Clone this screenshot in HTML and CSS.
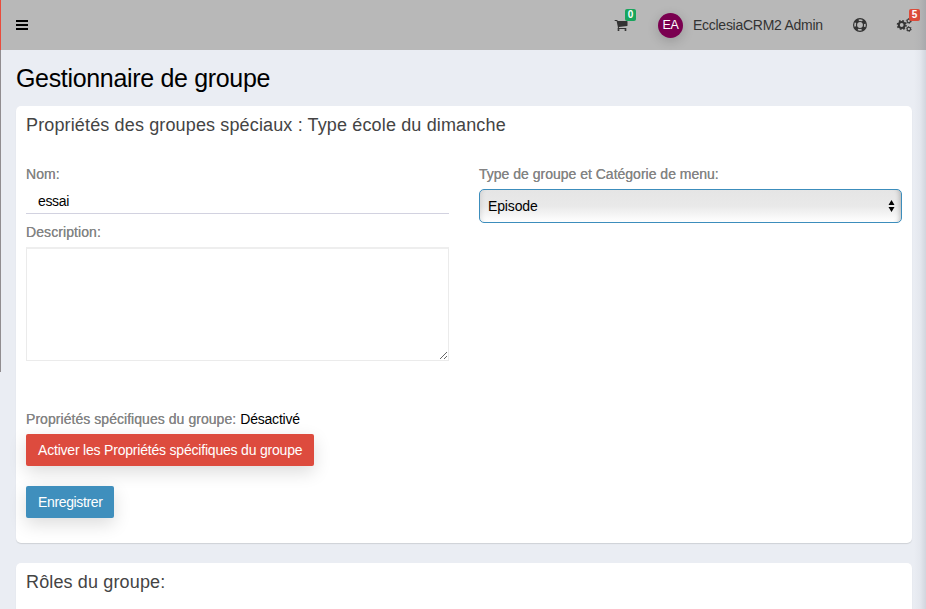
FILE: index.html
```html
<!DOCTYPE html>
<html lang="fr">
<head>
<meta charset="utf-8">
<title>Gestionnaire de groupe</title>
<link rel="stylesheet" href="styles.css">
</head>
<body>
<div class="edge"></div>
<header class="navbar">
  <svg class="bars" width="12" height="11" viewBox="0 0 12 11"><path d="M0 0h12v2H0zM0 4h12v2H0zM0 8h12v2H0z"/></svg>
  <nav class="tools">
    <span class="tool cart">
      <svg width="14" height="14" viewBox="0 0 1792 1792"><path d="M704 1536q0 52-38 90t-90 38-90-38-38-90 38-90 90-38 90 38 38 90zm896 0q0 52-38 90t-90 38-90-38-38-90 38-90 90-38 90 38 38 90zm128-1088v512q0 24-16.500 42.500t-40.500 21.500l-1044 122q13 60 13 70 0 16-24 64h920q26 0 45 19t19 45-19 45-45 19h-1024q-26 0-45-19t-19-45q0-11 8-31.500t16-36 21.500-40 15.500-29.500l-177-823h-204q-26 0-45-19t-19-45 19-45 45-19h256q16 0 28.500 6.500t19.500 15.500 13 24.500 8 26 5.500 29.500 4.500 26h1201q26 0 45 19t19 45z"/></svg>
      <span class="badge green">0</span>
    </span>
    <span class="avatar"><span>EA</span></span>
    <span class="user">EcclesiaCRM2 Admin</span>
    <svg class="ring" width="14" height="14" viewBox="0 0 14 14"><g fill="none" stroke="#333"><circle cx="7" cy="7" r="6.400" stroke-width="1.200"/><circle cx="7" cy="7" r="3.500" stroke-width="1.200"/><circle cx="7" cy="7" r="4.900" stroke-width="3" stroke-dasharray="3.850" stroke-dashoffset="-1.920"/></g></svg>
    <span class="tool cogs">
      <svg width="16" height="14" viewBox="0 0 16 14"><g fill="none" stroke="#333"><circle cx="5.700" cy="7" r="2.900" stroke-width="2"/><circle cx="5.700" cy="7" r="4.300" stroke-width="1.500" stroke-dasharray="1.690"/><circle cx="12.800" cy="3" r="1.700" stroke-width="1.100"/><circle cx="12.800" cy="3" r="2.500" stroke-width=".8" stroke-dasharray="1.310"/><circle cx="12.800" cy="11" r="1.700" stroke-width="1.100"/><circle cx="12.800" cy="11" r="2.500" stroke-width=".8" stroke-dasharray="1.310"/></g></svg>
      <span class="badge red">5</span>
    </span>
  </nav>
</header>
<main>
  <h1>Gestionnaire de groupe</h1>
  <section class="card main-card">
    <h3>Propriétés des groupes spéciaux : Type école du dimanche</h3>
    <div class="columns">
      <div class="col">
        <label>Nom:</label>
        <input class="name" type="text" value="essai">
        <label class="desc">Description:</label>
        <textarea></textarea>
      </div>
      <div class="col">
        <label class="type">Type de groupe et Catégorie de menu:</label>
        <div class="select"><span>Episode</span>
          <svg width="7" height="12" viewBox="0 0 7 12"><path d="M3.500 0L6.500 5h-6zM.5 7h6l-3 5z"/></svg>
        </div>
      </div>
    </div>
    <div class="status"><span class="prop">Propriétés spécifiques du groupe:</span> <span class="off">Désactivé</span></div>
    <button class="btn danger">Activer les Propriétés spécifiques du groupe</button>
    <button class="btn primary">Enregistrer</button>
  </section>
  <section class="card roles">
    <h3>Rôles du groupe:</h3>
  </section>
</main>
<div class="side-shadow"></div>
</body>
</html>
```

FILE: styles.css
```css
* { box-sizing: border-box; }
body { margin: 0; height: 609px; overflow: hidden; background: #eaedf3; color: #000; font: 14px/20px "Liberation Sans", Arial, sans-serif; }
svg { display: block; flex: none; }
.edge { position: absolute; z-index: 3; left: 0; top: 0; width: 1px; height: 372px; background: linear-gradient(#e94b3c 50px, #918d90 50px); }
.side-shadow { position: absolute; z-index: 3; right: 0; top: 0; width: 12px; height: 609px; background: linear-gradient(90deg, rgba(80,90,110,0), rgba(80,90,110,.04) 50%, rgba(80,90,110,.16)); }
.navbar { height: 50px; background: #b8b8b8; display: flex; align-items: center; justify-content: space-between; padding: 0 14px 0 16px; }
.bars { margin-top: 1px; }
.tools { display: flex; align-items: center; color: #333; height: 50px; }
.tool { position: relative; }
.tool path { fill: #333; }
.cart { margin-right: 30px; }
.badge { position: absolute; border-radius: 2px; color: #fff; font: bold 10px/12px "Liberation Sans", sans-serif; text-align: center; width: 11px; height: 12px; }
.green { background: #18a55d; left: 11px; top: -9px; }
.red { background: #dd4b39; left: 13px; top: -9px; }
.avatar { width: 25px; height: 25px; border-radius: 50%; background: #7a0050; color: #fff; display: flex; align-items: center; justify-content: center; font-size: 12.500px; letter-spacing: -.3px; box-shadow: 0 3px 12px rgba(0,0,0,.18); }
.user { width: 131px; margin-left: 10px; white-space: nowrap; letter-spacing: -.27px; }
.ring { margin-left: 29px; }
.cogs { margin-left: 29px; }
main { padding: 0 14px 0 16px; }
h1, h3 { margin: 0; font-weight: 400; white-space: nowrap; }
h1 { font-size: 25px; line-height: 28px; padding-top: 14px; height: 56px; letter-spacing: -.33px; }
h3 { font-size: 18px; line-height: 20px; color: #444; letter-spacing: .14px; }
.card { background: #fff; border-radius: 5px; box-shadow: 0 1px 1px rgba(0,0,0,.12); padding: 9px 10px; }
.main-card { height: 437px; margin-bottom: 20px; }
.roles { height: 70px; }
.columns { display: grid; grid-template-columns: 423px 423px; gap: 30px; margin-top: 29px; height: 216px; }
.col { display: flex; flex-direction: column; align-items: flex-start; }
label { height: 20px; color: #848484; white-space: nowrap; letter-spacing: .08px; text-shadow: 0 0 .4px #848484; }
.type { letter-spacing: 0; }
.name { width: 423px; height: 27px; margin-top: 3px; border: 0; border-bottom: 1px solid #d2d2e0; padding: 2px 12px 0; outline: 0; background: none; font: inherit; letter-spacing: -.35px; }
.desc { margin-top: 8px; }
textarea { width: 423px; height: 114px; margin-top: 5px; border: 1px solid #ebebeb; border-top: 2px solid #eee; resize: vertical; display: block; }
.select { width: 423px; height: 34px; margin-top: 5px; border: 1px solid #3c8dbc; border-radius: 5px; padding: 0 6px 0 8px; display: flex; align-items: center; justify-content: space-between; background: linear-gradient(#e5e5e5, #e9e9e9 50%, #fff) padding-box; box-shadow: inset -6px 0 5px -5px rgba(0,0,0,.25), inset 6px 0 5px -5px rgba(0,0,0,.1); letter-spacing: -.14px; }
.status { margin-top: 29px; height: 20px; white-space: nowrap; display: flex; gap: 4px; }
.prop { color: #848484; letter-spacing: .05px; text-shadow: 0 0 .4px #848484; }
.off { letter-spacing: -.2px; }
.btn { display: block; height: 32px; border: 0; border-radius: 2px; color: #fff; padding: 0 12px; font: inherit; white-space: nowrap; text-align: left; box-shadow: 0 6px 18px rgba(0,0,0,.14); }
.danger { background: #dd4b3e; width: 288px; margin-top: 5px; letter-spacing: -.2px; }
.primary { background: #3f8fbd; width: 88px; margin-top: 20px; letter-spacing: -.36px; }
```
